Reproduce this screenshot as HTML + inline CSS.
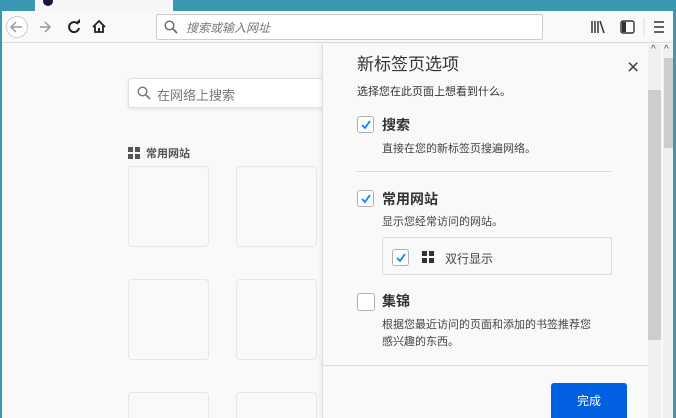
<!DOCTYPE html>
<html style="width:676px;height:418px;overflow:hidden"><head><meta charset="utf-8"><style>
*{margin:0;padding:0;box-sizing:border-box}
body{width:676px;height:418px;overflow:hidden;position:relative;background:#f9f9fa;font-family:"Liberation Sans","Noto Sans CJK SC",sans-serif;}
.abs{position:absolute}
.cb{position:absolute;width:17px;height:17px;border:1px solid #b1b1b3;border-radius:3px;background:#fff}
.cb svg{position:absolute;left:2px;top:2px}
.tile{position:absolute;width:81px;height:81px;border:1px solid #e6e6e8;border-radius:4px;background:#f9f9fa}
</style></head><body>
<div class="abs" style="left:0;top:0;width:676px;height:11px;background:#3a98b3"></div>
<div class="abs" style="left:35px;top:0;width:138px;height:11px;background:#f5f6f7"></div>
<div class="abs" style="left:43px;top:-4px;width:10px;height:10px;border-radius:50%;background:#20123a"></div>
<div class="abs" style="left:0;top:11px;width:676px;height:32px;background:#f9f9fa;border-bottom:1px solid #ddd"></div>
<div class="abs" style="left:0;top:11px;width:2px;height:407px;background:#3a98b3"></div>
<div class="abs" style="left:673px;top:11px;width:3px;height:407px;background:#3a98b3"></div>
<svg class="abs" style="left:4px;top:15px" width="110" height="24">
<circle cx="13" cy="12" r="10.5" fill="#fff" stroke="#ccc"/>
<path d="M18 12H8M12 7l-5 5 5 5" stroke="#999" stroke-width="1.5" fill="none"/>
<path d="M46 12H36M41 7l5 5-5 5" stroke="#999" stroke-width="1.5" fill="none"/>
<path d="M74 9a5 5 0 1 0 1 4" stroke="#222" stroke-width="2" fill="none"/><path d="M71 8h5V4z" fill="#222"/>
<path d="M89 12l6-6 6 6M91 11v6h8v-6" stroke="#222" stroke-width="1.8" fill="none"/><rect x="94" y="13" width="2" height="4" fill="#222"/>
</svg>
<div class="abs" style="left:156px;top:14px;width:387px;height:26px;background:#fff;border:1px solid #ccc;border-radius:2px"></div>
<svg class="abs" style="left:164px;top:20px" width="14" height="14"><circle cx="5.5" cy="5.5" r="4.3" stroke="#666" stroke-width="1.4" fill="none"/><path d="M9 9l4 4" stroke="#666" stroke-width="1.6"/></svg>
<div class="abs" style="left:186px;top:19px;font-size:12px;color:#777;font-style:italic">搜索或输入网址</div>
<svg class="abs" style="left:590px;top:18px" width="80" height="18">
<path d="M2 3v12M5 3v12M8 3v12M10 3l4 12" stroke="#333" stroke-width="1.5"/>
<rect x="31" y="3" width="13" height="12" rx="2" stroke="#333" stroke-width="1.4" fill="none"/><rect x="32" y="4" width="4" height="10" fill="#333"/>
<line x1="54" y1="0" x2="54" y2="18" stroke="#ddd"/>
<path d="M64 4h10M64 9h10M64 14h10" stroke="#333" stroke-width="1.5"/>
</svg>
<div class="abs" style="left:128px;top:78px;width:210px;height:30px;background:#fff;border:1px solid #e0e0e2;border-radius:3px;box-shadow:0 1px 3px rgba(0,0,0,.1)"></div>
<svg class="abs" style="left:137px;top:86px" width="14" height="14"><circle cx="5.5" cy="5.5" r="4.3" stroke="#777" stroke-width="1.4" fill="none"/><path d="M9 9l4 4" stroke="#777" stroke-width="1.6"/></svg>
<div class="abs" style="left:157px;top:85px;font-size:13px;color:#777">在网络上搜索</div>
<svg class="abs" style="left:128px;top:147px" width="12" height="12"><rect x="0" y="0" width="5" height="5" fill="#555"/><rect x="7" y="0" width="5" height="5" fill="#555"/><rect x="0" y="7" width="5" height="5" fill="#555"/><rect x="7" y="7" width="5" height="5" fill="#555"/></svg>
<div class="abs" style="left:146px;top:145px;font-size:11px;color:#555;font-weight:bold">常用网站</div>
<div class="tile" style="left:128px;top:166px"></div><div class="tile" style="left:236px;top:166px"></div>
<div class="tile" style="left:128px;top:279px"></div><div class="tile" style="left:236px;top:279px"></div>
<div class="tile" style="left:128px;top:392px;height:26px;border-bottom:none;border-radius:4px 4px 0 0"></div><div class="tile" style="left:236px;top:392px;height:26px;border-bottom:none;border-radius:4px 4px 0 0"></div>
<div class="abs" style="left:322px;top:44px;width:338px;height:374px;background:#f9f9fa;border-left:1px solid #ddd;box-shadow:-2px 0 4px rgba(0,0,0,.06)"></div>
<div class="abs" style="left:648px;top:44px;width:13px;height:374px;background:#f0f0f0"></div>
<div class="abs" style="left:648px;top:90px;width:13px;height:250px;background:#cdcdcd"></div>
<div class="abs" style="left:663px;top:44px;width:10px;height:374px;background:#f0f0f0"></div>
<div class="abs" style="left:664px;top:58px;width:9px;height:90px;background:#cdcdcd"></div>
<div class="abs" style="left:651px;top:44px;font-size:10px;color:#555">^</div>
<div class="abs" style="left:664px;top:44px;font-size:10px;color:#555">^</div>
<div class="abs" style="left:357px;top:50px;font-size:17px;color:#333">新标签页选项</div>
<div class="abs" style="left:627px;top:56px;font-size:21px;color:#444">×</div>
<div class="abs" style="left:357px;top:83px;font-size:11px;color:#333">选择您在此页面上想看到什么。</div>
<div class="cb" style="left:357px;top:116px"><svg width="12" height="12"><path d="M2 6l3 3 5-7" stroke="#0a84ff" stroke-width="1.8" fill="none"/></svg></div>
<div class="abs" style="left:382px;top:115px;font-size:14px;color:#333;font-weight:bold">搜索</div>
<div class="abs" style="left:382px;top:140px;font-size:11px;color:#444">直接在您的新标签页搜遍网络。</div>
<div class="abs" style="left:357px;top:171px;width:255px;height:1px;background:#ddd"></div>
<div class="cb" style="left:357px;top:190px"><svg width="12" height="12"><path d="M2 6l3 3 5-7" stroke="#0a84ff" stroke-width="1.8" fill="none"/></svg></div>
<div class="abs" style="left:382px;top:189px;font-size:14px;color:#333;font-weight:bold">常用网站</div>
<div class="abs" style="left:382px;top:213px;font-size:11px;color:#444">显示您经常访问的网站。</div>
<div class="abs" style="left:382px;top:237px;width:230px;height:38px;border:1px solid #ddd;border-radius:2px;background:#f9f9fa"></div>
<div class="cb" style="left:392px;top:249px"><svg width="12" height="12"><path d="M2 6l3 3 5-7" stroke="#0a84ff" stroke-width="1.8" fill="none"/></svg></div>
<svg class="abs" style="left:422px;top:251px" width="12" height="12"><rect x="0" y="0" width="5" height="5" fill="#333"/><rect x="7" y="0" width="5" height="5" fill="#333"/><rect x="0" y="7" width="5" height="5" fill="#333"/><rect x="7" y="7" width="5" height="5" fill="#333"/></svg>
<div class="abs" style="left:445px;top:250px;font-size:12px;color:#444">双行显示</div>
<div class="cb" style="left:357px;top:293px;width:18px;height:18px"></div>
<div class="abs" style="left:382px;top:291px;font-size:14px;color:#333;font-weight:bold">集锦</div>
<div class="abs" style="left:382px;top:317px;font-size:11px;color:#444;line-height:17px;width:232px">根据您最近访问的页面和添加的书签推荐您<br>感兴趣的东西。</div>
<div class="abs" style="left:323px;top:365px;width:325px;height:1px;background:#ddd"></div>
<div class="abs" style="left:551px;top:383px;width:76px;height:35px;background:#0060df;border-radius:3px 3px 0 0;color:#fff;font-size:12px;text-align:center;line-height:36px">完成</div>
</body></html>
